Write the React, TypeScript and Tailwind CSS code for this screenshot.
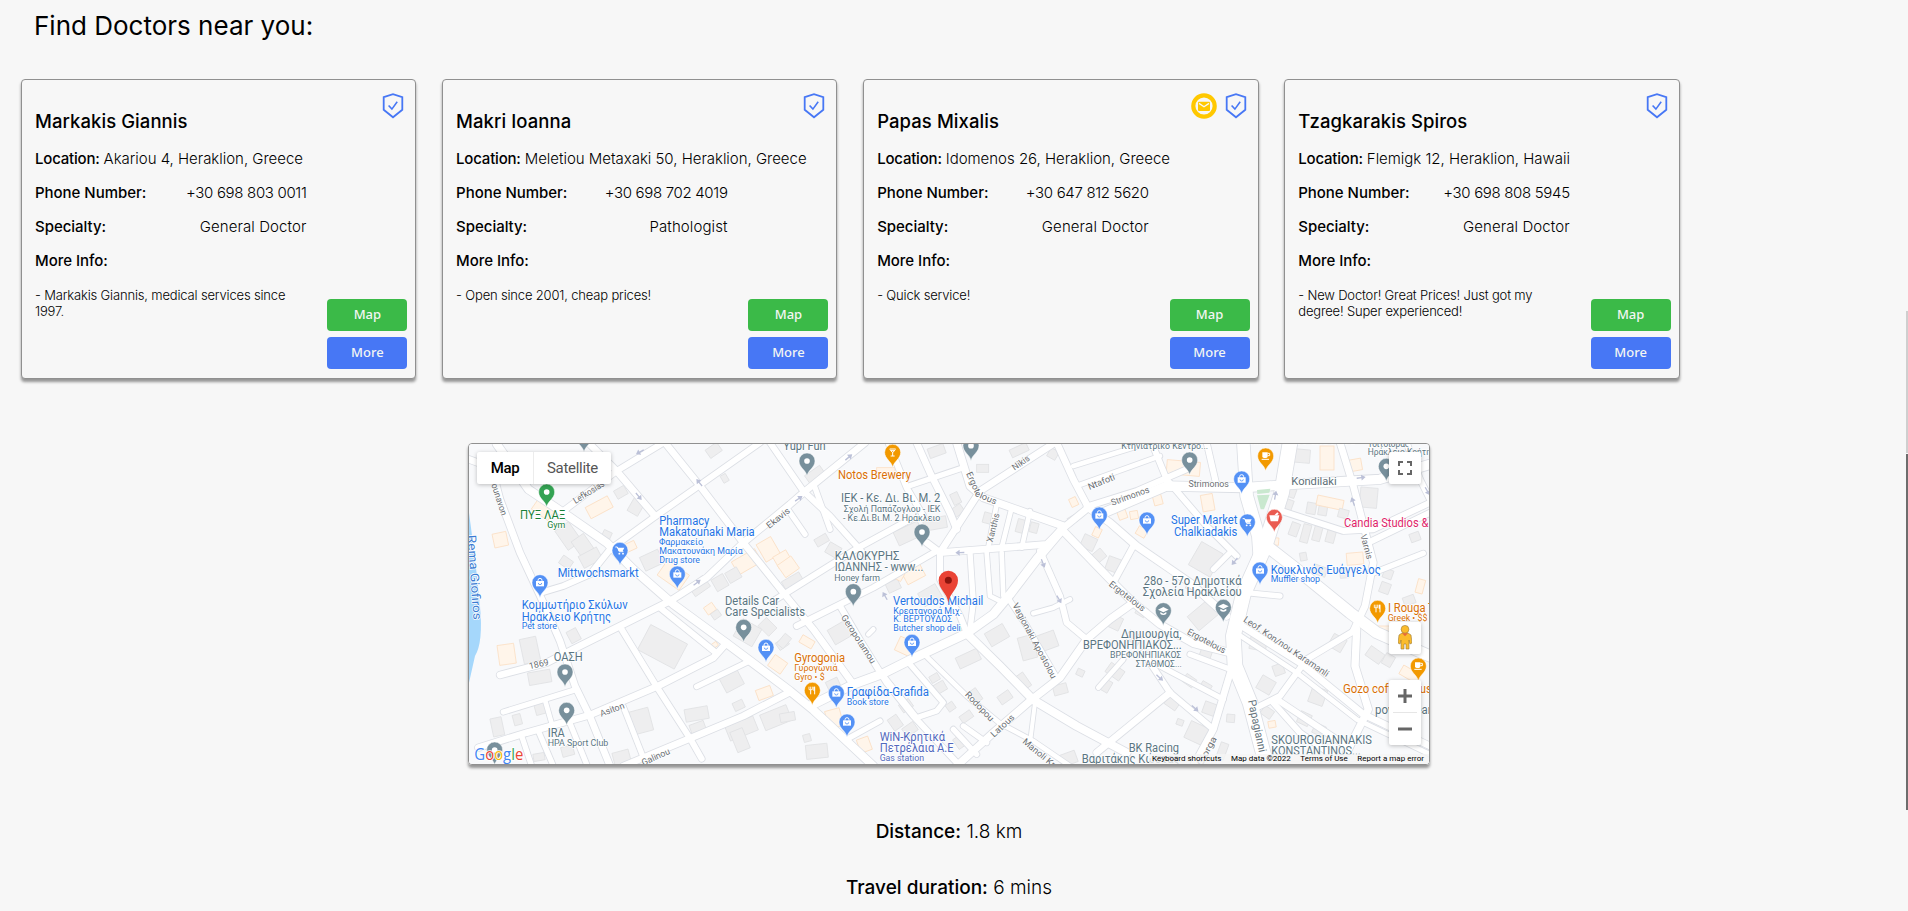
import React from "react";

type Doctor = {
  name: string;
  address: string;
  phone: string;
  specialty: string;
  info: string;
  mail?: boolean;
};

const doctors: Doctor[] = [
  { name: "Markakis Giannis", address: "Akariou 4, Heraklion, Greece", phone: "+30 698 803 0011", specialty: "General Doctor", info: "- Markakis Giannis, medical services since 1997." },
  { name: "Makri Ioanna", address: "Meletiou Metaxaki 50, Heraklion, Greece", phone: "+30 698 702 4019", specialty: "Pathologist", info: "- Open since 2001, cheap prices!" },
  { name: "Papas Mixalis", address: "Idomenos 26, Heraklion, Greece", phone: "+30 647 812 5620", specialty: "General Doctor", info: "- Quick service!", mail: true },
  { name: "Tzagkarakis Spiros", address: "Flemigk 12, Heraklion, Hawaii", phone: "+30 698 808 5945", specialty: "General Doctor", info: "- New Doctor! Great Prices! Just got my degree! Super experienced!" },
];

function ShieldIcon() {
  return (
    <svg className="h-[26px] w-[22px]" viewBox="0 0 22 26" fill="none" stroke="#4777f5">
      <path d="M1.700 4.200 11 1.200l9.300 3v12.600L11 24.300l-9.300-7.500z" strokeWidth="1.800" />
      <path d="m6.600 12.500 3.300 3.600 5.300-7.300" strokeWidth="1.600" />
    </svg>
  );
}

function MailIcon() {
  return (
    <svg className="h-[26px] w-[26px]" viewBox="0 0 26 26">
      <circle cx="13" cy="13" r="10.700" fill="#f7f7f7" stroke="#ffc800" strokeWidth="4.200" />
      <rect x="7" y="8.700" width="12" height="9.300" rx="1" fill="#ffc800" />
      <path d="m8 10.400 5 3.400 5-3.400" fill="none" stroke="#f7f7f7" strokeWidth="1.300" />
    </svg>
  );
}

function Field({ label, value, numeric }: { label: string; value?: string; numeric?: boolean }) {
  return (
    <div className="flex h-[34px] w-[271.500px] items-center justify-between text-[15px] whitespace-nowrap">
      <span className="font-medium tracking-[-0.03px]">{label}</span>
      <span className={numeric ? "font-light tracking-[-0.33px]" : "font-light tracking-[0.1px]"}>{value}</span>
    </div>
  );
}

function DoctorCard({ d }: { d: Doctor }) {
  return (
    <article className="flex h-[300px] flex-col rounded-[4px] border border-[#909090] bg-[#f7f7f7] pr-[8px] pl-[13px] shadow-[0_3px_3px_rgba(0,0,0,0.4)]">
      <div className="flex h-[27px] justify-end gap-[8px] pt-[13px] pr-[3px]">
        {d.mail && <MailIcon />}
        <ShieldIcon />
      </div>
      <h2 className="mt-[1px] h-[26px] text-[18.500px] leading-[26px] font-medium tracking-[0.07px]">{d.name}</h2>
      <div className="mt-[8px] flex h-[34px] items-center gap-[4px] text-[15px] whitespace-nowrap">
        <span className="font-medium tracking-[-0.2px]">Location:</span>
        <span className="font-light tracking-[-0.02px]">{d.address}</span>
      </div>
      <Field label="Phone Number:" value={d.phone} numeric />
      <Field label="Specialty:" value={d.specialty} />
      <Field label="More Info:" />
      <div className="flex justify-between">
        <p className="mt-[9px] w-[272px] text-[13px] leading-4 font-light tracking-[-0.17px]">{d.info}</p>
        <div className="mt-[21px] flex flex-col gap-1.5 font-[family-name:'Noto_Sans','Open_Sans',sans-serif] text-[13px] font-medium text-[#f3f6f3]">
          <button className="h-8 w-20 rounded-[4px] bg-[#3bba48]">Map</button>
          <button className="h-8 w-20 rounded-[4px] bg-[#4777f5]">More</button>
        </div>
      </div>
    </article>
  );
}

/* Map drawing units: three per CSS pixel. */
const roads: [number, string][] = [
  [20, "M27 70 95 95 120 190 180 350 250 500 300 615 345 750 390 842 450 990"],
  [24, "M110 24 205 160 310 230 440 320 520 400 640 505 800 622 920 712 990 765 1060 822 1240 990"],
  [18, "M600 515 770 652"],
  [20, "M365 0 470 105 585 240"],
  [18, "M250 468 310 450 390 415 450 340 585 242 730 140 900 20"],
  [18, "M310 225 470 105 610 20"],
  [20, "M615 20 720 150 850 320 990 495 1060 580 1180 745"],
  [20, "M120 717 260 680 340 640 480 570 630 495 740 425 850 320 990 205 1030 170 1215 20"],
  [20, "M55 935 200 890 390 837 590 752 760 665 800 620"],
  [16, "M130 828 350 760"],
  [18, "M480 572 590 752 690 907 725 968"],
  [16, "M710 752 865 677"],
  [20, "M490 990 690 907 850 840 990 768"],
  [16, "M490 812 560 990"],
  [14, "M255 792 275 862"],
  [16, "M330 862 382 990"],
  [16, "M185 900 215 990"],
  [16, "M235 885 280 990"],
  [18, "M930 20 1030 165 1110 240 1195 335 1215 360"],
  [18, "M940 495 1190 338 1350 250"],
  [18, "M1010 570 1240 455 1430 345"],
  [16, "M980 215 1035 295"],
  [16, "M1065 155 1110 280"],
  [18, "M1285 20 1340 155 1390 240"],
  [16, "M1340 152 1510 95"],
  [20, "M1370 20 1410 110 1470 230 1490 280"],
  [22, "M1490 20 1530 150 1570 185 1810 270"],
  [20, "M1800 10 1560 165 1440 350 1400 320"],
  [20, "M1790 20 1840 130 1885 215 1805 280"],
  [14, "M1840 90 2100 10"],
  [14, "M1850 150 2100 60"],
  [18, "M1880 212 2030 165 2180 100"],
  [20, "M1440 350 1760 325 1805 280"],
  [16, "M1530 350 1540 500 1530 580"],
  [14, "M1580 350 1590 480 1630 500"],
  [14, "M1625 350 1630 480"],
  [18, "M1440 350 1440 430 1500 540 1520 590"],
  [14, "M1610 205 1585 335"],
  [14, "M1655 215 1625 335"],
  [14, "M1710 225 1685 335"],
  [26, "M1050 810 1180 745 1270 712 1350 672 1520 592 1600 535 1650 475 1730 370 1805 282"],
  [18, "M1740 345 1800 480 1820 560 1880 610"],
  [14, "M1720 532 1780 515 1830 490"],
  [16, "M1640 480 1700 570 1790 725"],
  [22, "M1805 280 1950 430 2020 500 2100 565 2200 622 2310 650"],
  [22, "M1885 215 1950 260 2030 330 2190 440 2300 540"],
  [18, "M2020 330 1960 440"],
  [18, "M1140 510 1205 620 1280 740 1360 840 1500 990"],
  [14, "M1225 595 1240 580"],
  [24, "M1520 592 1620 690 1720 792 1850 870 2000 950"],
  [22, "M1490 990 1600 890 1710 795 1800 725 1880 610 1950 550 2020 500"],
  [16, "M1350 685 1450 800 1430 825 1370 845 1270 720"],
  [14, "M1400 662 1520 780 1620 862 1720 915 1830 990"],
  [12, "M1725 800 1710 920"],
  [16, "M1480 880 1550 955"],
  [16, "M1160 910 1260 855"],
  [16, "M1510 870 1580 920"],
  [44, "M2490 20 2465 170 2415 330 2350 475 2320 600 2325 690 2370 800 2420 990"],
  [38, "M2350 20 2360 180 2395 300 2400 370"],
  [18, "M2075 20 2120 130 2240 270 2330 360"],
  [18, "M2240 20 2270 150"],
  [28, "M1920 235 2120 150 2350 155 2500 145 2760 130 2910 85"],
  [16, "M2260 400 2310 350"],
  [34, "M2420 330 2510 400 2670 530 2750 590 2910 660"],
  [20, "M2330 560 2520 680 2710 835 2910 930"],
  [14, "M2335 595 2510 710 2690 850 2910 955"],
  [20, "M2640 20 2680 150 2740 380 2715 510 2680 585"],
  [18, "M2465 225 2650 285 2740 280 2910 200"],
  [18, "M2735 315 2910 230"],
  [16, "M2730 415 2890 352"],
  [18, "M2690 580 2540 670 2460 780 2390 815"],
  [22, "M2690 580 2685 690 2725 820 2660 950"],
  [18, "M2440 800 2520 890 2620 960"],
  [18, "M2450 790 2660 930"],
  [16, "M2190 655 2310 700"],
  [20, "M2320 680 2260 880 2200 990"],
  [18, "M2050 650 2130 770 2260 880"],
  [16, "M2100 690 2290 790"],
  [20, "M1910 950 2130 770"],
  [14, "M1915 755 1990 670"],
  [16, "M2360 470 2460 480"],
  [18, "M2840 20 2880 130 2910 190"],
];

/* x, y, width, height, rotation; last flag marks commercial buildings. */
const buildings: [number, number, number, number, number, 0 | 1][] = [
  [380, 195, 75, 38, -28, 1], [465, 155, 35, 28, -30, 0], [510, 190, 36, 45, 30, 0], [300, 265, 50, 70, -35, 0], [345, 300, 45, 55, -35, 0],
  [100, 290, 42, 42, -12, 1], [300, 365, 36, 28, 35, 0], [360, 345, 62, 40, -28, 0], [428, 285, 26, 20, 25, 0], [490, 320, 38, 25, -25, 1],
  [785, 115, 18, 24, -30, 0], [545, 350, 60, 45, -25, 0], [600, 390, 80, 55, 35, 1], [820, 355, 80, 45, -30, 1], [800, 400, 40, 35, -30, 0],
  [900, 310, 50, 60, -30, 1], [945, 350, 45, 40, -30, 1], [690, 430, 55, 40, -35, 0], [760, 420, 40, 40, -30, 0], [740, 28, 42, 30, -35, 0], [220, 200, 60, 40, 35, 1],
  [115, 625, 50, 60, -8, 1], [185, 605, 50, 75, -12, 0], [205, 705, 68, 38, -10, 0], [325, 580, 32, 38, -28, 0], [545, 590, 125, 85, 28, 0],
  [160, 835, 24, 32, -15, 0], [95, 845, 34, 55, -12, 0], [225, 800, 32, 35, -15, 0], [515, 820, 58, 70, -15, 0], [675, 815, 70, 38, -10, 0],
  [690, 860, 45, 26, -20, 0], [785, 710, 60, 50, -28, 0], [820, 795, 32, 26, -25, 0], [800, 855, 90, 45, -22, 0], [820, 880, 40, 65, -22, 0], [905, 820, 85, 50, -22, 0],
  [890, 755, 46, 32, -20, 1], [735, 505, 30, 26, -35, 1], [755, 525, 26, 22, -35, 0], [830, 560, 65, 60, 30, 0], [900, 555, 45, 35, 45, 0], [930, 665, 46, 40, 35, 1],
  [460, 945, 50, 40, -15, 0], [220, 952, 34, 22, -10, 0], [305, 930, 36, 30, -15, 0], [950, 610, 34, 26, -35, 0], [755, 620, 18, 14, -35, 1],
  [1040, 100, 55, 40, -35, 0], [1250, 95, 55, 30, 0, 1], [1065, 300, 40, 25, -30, 0], [1100, 325, 40, 35, 30, 0], [960, 370, 50, 45, -35, 1], [970, 420, 60, 40, -30, 0],
  [1475, 170, 24, 35, -25, 0], [1475, 210, 35, 28, -35, 0], [1305, 270, 80, 45, -25, 0], [1390, 245, 70, 35, -10, 0], [1550, 85, 36, 24, 0, 0], [1330, 390, 60, 45, -28, 1], [1380, 455, 60, 45, -30, 0],
  [1670, 250, 24, 40, 15, 0], [1710, 260, 24, 30, 15, 0], [1570, 230, 24, 32, 15, 0], [1405, 30, 50, 30, -20, 0], [1650, 30, 55, 25, -25, 0], [1830, 185, 22, 26, -25, 1], [1765, 40, 28, 28, 30, 0],
  [1825, 240, 26, 22, -30, 0], [1865, 300, 42, 40, 25, 0], [1895, 345, 40, 32, -40, 0], [1900, 275, 22, 28, 25, 1], [1280, 435, 40, 30, -25, 0], [1300, 405, 30, 26, 30, 1],
  [1110, 565, 60, 50, -30, 0], [1020, 605, 42, 25, 30, 1], [960, 595, 25, 40, 40, 0], [1310, 610, 55, 45, 25, 1], [1100, 730, 38, 28, -25, 0], [1490, 650, 70, 36, -25, 0],
  [1580, 575, 62, 45, -30, 0], [1680, 600, 45, 70, -15, 0], [1735, 590, 55, 50, -20, 0], [1665, 715, 40, 48, -35, 0], [1615, 770, 40, 28, -35, 0], [1530, 760, 30, 40, -35, 0],
  [1410, 715, 28, 22, -30, 0], [1420, 740, 38, 30, -30, 0], [1460, 800, 24, 24, -35, 0], [1500, 830, 38, 24, -35, 0], [1100, 820, 45, 55, -15, 1], [1195, 905, 36, 42, -20, 1],
  [1030, 895, 22, 22, -15, 0], [1038, 925, 65, 42, -6, 0], [960, 830, 45, 26, -10, 0], [1290, 840, 32, 40, -35, 0], [1330, 865, 40, 30, -35, 0], [1780, 745, 42, 30, -15, 0], [1850, 700, 22, 20, 25, 0],
  [1485, 900, 30, 35, -35, 0], [1800, 950, 50, 36, -20, 0], [1320, 795, 36, 28, -35, 0],
  [2120, 75, 100, 42, 5, 1], [1970, 200, 26, 50, -20, 1], [2010, 225, 24, 24, -10, 1], [2080, 175, 26, 32, -15, 1], [2225, 175, 36, 50, -10, 1], [2030, 275, 30, 26, 30, 1],
  [2200, 330, 75, 80, 30, 0], [1940, 365, 42, 42, 20, 0], [2580, 30, 42, 72, 0, 1], [2500, 40, 50, 40, 5, 0], [2660, 70, 45, 35, -10, 1], [2475, 155, 32, 28, 20, 0], [2470, 190, 28, 32, 20, 0],
  [2540, 200, 28, 34, 10, 0], [2575, 210, 26, 28, 10, 0], [2570, 185, 80, 30, 12, 1], [2635, 220, 30, 26, 15, 0], [2490, 260, 26, 40, 20, 0], [2525, 265, 24, 55, 15, 0], [2560, 270, 24, 45, 15, 0], [2600, 275, 26, 45, 15, 0],
  [2700, 155, 52, 60, 5, 0], [2660, 350, 50, 36, -5, 1], [2430, 305, 26, 22, 5, 1], [2520, 350, 20, 24, -10, 0], [2640, 400, 26, 26, -5, 0], [2560, 390, 40, 28, 20, 0], [2770, 400, 28, 28, 20, 0], [2760, 440, 30, 32, 20, 0],
  [2870, 430, 22, 42, 15, 1], [2850, 290, 30, 26, -20, 0], [2830, 480, 35, 26, -20, 0], [2370, 600, 50, 42, 10, 0], [2395, 725, 46, 44, 30, 0], [2440, 685, 32, 32, -20, 0], [2550, 755, 46, 50, 20, 0],
  [2720, 640, 50, 34, 35, 0], [2770, 655, 30, 35, 30, 0], [2610, 600, 44, 42, 30, 0], [2425, 855, 22, 20, -10, 1], [2405, 815, 34, 28, 35, 0], [2515, 830, 36, 36, 25, 0], [2560, 865, 34, 32, 25, 0],
  [2180, 865, 65, 55, 25, 0], [2230, 800, 38, 36, 20, 0], [2150, 850, 20, 18, 20, 0], [2300, 835, 24, 24, 5, 0], [2275, 920, 24, 50, 20, 0], [2120, 775, 40, 42, 35, 0], [2170, 720, 36, 28, 35, 0], [2220, 740, 32, 28, 30, 0],
  [1940, 690, 50, 34, 35, 0], [1920, 730, 32, 36, 30, 0], [1950, 540, 34, 40, 25, 0], [2190, 510, 80, 55, -40, 0], [2000, 590, 42, 30, 30, 0], [2220, 640, 34, 28, 20, 0], [2820, 700, 60, 30, 30, 1], [2750, 570, 45, 30, 0, 1],
  [2380, 385, 30, 32, 20, 1], [2030, 510, 30, 30, 30, 0], [2180, 440, 34, 26, 30, 0],
];

type PinKind = "dot" | "bag" | "cart" | "fork" | "cup" | "school" | "drink" | "basket";
const pins: [number, number, string, PinKind][] = [
  [260, 168, "#34a353", "dot"], [372, 3, "#78909c", "dot"], [480, 343, "#5491f5", "cart"], [240, 440, "#5491f5", "bag"], [652, 414, "#5491f5", "bag"],
  [315, 708, "#78909c", "dot"], [320, 823, "#78909c", "dot"], [104, 942, "#78909c", "dot"], [851, 574, "#78909c", "dot"], [918, 634, "#5491f5", "bag"],
  [1041, 75, "#78909c", "dot"], [1298, 49, "#f29900", "drink"], [1533, 29, "#78909c", "dot"], [1386, 288, "#78909c", "dot"], [1180, 467, "#78909c", "dot"],
  [1918, 237, "#5491f5", "bag"], [1356, 619, "#5491f5", "bag"], [1057, 763, "#f29900", "fork"], [1129, 771, "#5491f5", "bag"], [1161, 858, "#5491f5", "bag"],
  [2189, 72, "#78909c", "dot"], [2417, 60, "#f29900", "cup"], [2345, 129, "#5491f5", "bag"], [2061, 252, "#5491f5", "bag"], [2362, 258, "#5491f5", "cart"],
  [2443, 244, "#ea5b51", "basket"], [2400, 402, "#5491f5", "bag"], [2779, 91, "#78909c", "dot"], [2110, 524, "#78909c", "school"], [2290, 514, "#78909c", "school"],
  [2753, 517, "#f29900", "fork"], [2875, 690, "#f29900", "cup"],
];

function Glyph({ kind, color }: { kind: PinKind; color: string }) {
  switch (kind) {
    case "dot":
      return <circle r="8.500" fill="#fff" />;
    case "bag":
      return (
        <g>
          <path d="M-6-4v-3a6 6 0 0 1 12 0v3" fill="none" stroke="#fff" strokeWidth="3" />
          <path d="M-12-5h24v16h-24z" fill="#fff" />
          <path d="M-5 1a5 5 0 0 0 10 0" fill="none" stroke={color} strokeWidth="2.500" />
        </g>
      );
    case "cart":
      return (
        <g>
          <path d="M-14-10h6l6 14h12" fill="none" stroke="#fff" strokeWidth="3" />
          <path d="M-8-8h21l-5 10H-4z" fill="#fff" />
          <circle cx="-2" cy="10" r="2.800" fill="#fff" />
          <circle cx="9" cy="10" r="2.800" fill="#fff" />
        </g>
      );
    case "fork":
      return (
        <g fill="none" stroke="#fff" strokeWidth="3">
          <path d="M-5-1v13M7-11v23" />
          <path d="M-10-11v9h10v-9M-5-11v9" strokeWidth="2.500" />
          <path d="M5-11v12" strokeWidth="4" />
        </g>
      );
    case "cup":
      return (
        <g>
          <path d="M-10-11h16v12q0 5-5 5h-6q-5 0-5-5z" fill="#fff" />
          <path d="M6-8h6v7H6M-12 10h22" fill="none" stroke="#fff" strokeWidth="3" />
        </g>
      );
    case "school":
      return (
        <g fill="#fff">
          <path d="m-16-3 16-8 16 8-16 8z" />
          <path d="M-9 4v6q9 6 18 0V4L0 9z" />
        </g>
      );
    case "drink":
      return <path d="M-9-10H9M-8-8 0 1l8-9M0 0v11M-6 11H6M-5-5H5" fill="none" stroke="#fff" strokeWidth="3" />;
    case "basket":
      return (
        <g fill="#fff">
          <path d="M-15-6h30l-4 18h-22z" />
          <path d="m0-6 9-9 4 4-5 5z" />
        </g>
      );
  }
}

function Pin({ x, y, color, kind }: { x: number; y: number; color: string; kind: PinKind }) {
  return (
    <g transform={`translate(${x} ${y})`}>
      <path d="M0 45C-3 27-24 20-24 0a24 24 0 0 1 48 0C24 20 3 27 0 45Z" fill={color} stroke="#fff" strokeWidth="1.500" />
      <Glyph kind={kind} color={color} />
    </g>
  );
}

const GREY = "#5a7582";
const BLUE = "#2474e5";
const ORANGE = "#d96f05";

/* x, baseline, width, size, colour, text */
const labels: [number, number, number, number, string, string][] = [
  [180, 248, 136, 36, "#188038", "ΠΥΞ ΛΑΞ"], [262, 276, 54, 27, "#188038", "Gym"],
  [598, 267, 150, 36, BLUE, "Pharmacy"], [598, 301, 286, 36, BLUE, "Makatounaki Maria"],
  [597, 327, 132, 27, BLUE, "Φαρμακείο"], [598, 354, 250, 27, BLUE, "Μακατουνάκη Μαρία"], [598, 380, 122, 27, BLUE, "Drug store"],
  [293, 423, 243, 36, BLUE, "Mittwochsmarkt"],
  [185, 519, 318, 36, BLUE, "Κομμωτήριο Σκύλων"], [185, 554, 268, 36, BLUE, "Ηράκλειο Κρήτης"], [185, 580, 106, 27, BLUE, "Pet store"],
  [795, 507, 162, 36, GREY, "Details Car"], [795, 541, 240, 36, GREY, "Care Specialists"],
  [281, 674, 87, 36, GREY, "ΟΑΣΗ"], [263, 903, 51, 36, GREY, "IRA"], [263, 930, 182, 27, GREY, "HPA Sport Club"],
  [970, 41, 127, 36, GREY, "Yupi Fun"], [1134, 130, 219, 36, ORANGE, "Notos Brewery"],
  [1143, 199, 298, 36, GREY, "ΙΕΚ - Κε. Δι. Βι. Μ. 2"], [1151, 228, 290, 27, GREY, "Σχολή Παπάζογλου - ΙΕΚ"], [1149, 255, 292, 27, GREY, "- Κε.Δι.Βι.Μ. 2 Ηράκλειο"],
  [1124, 372, 194, 36, GREY, "ΚΑΛΟΚΥΡΗΣ"], [1124, 406, 266, 36, GREY, "ΙΩΑΝΝΗΣ - www..."], [1123, 434, 137, 27, GREY, "Honey farm"],
  [1299, 507, 271, 36, BLUE, "Vertoudos Michail"], [1300, 533, 206, 27, BLUE, "Κρεαταγορά Μιχ."], [1300, 559, 177, 27, BLUE, "Κ. ΒΕΡΤΟΥΔΟΣ"], [1300, 586, 202, 27, BLUE, "Butcher shop deli"],
  [1003, 678, 152, 36, ORANGE, "Gyrogonia"], [1003, 705, 130, 27, ORANGE, "Γυρογωνιά"], [1003, 731, 91, 27, ORANGE, "Gyro • $"],
  [1160, 781, 247, 36, BLUE, "Γραφίδα-Grafida"], [1160, 808, 126, 27, BLUE, "Book store"],
  [1259, 914, 196, 36, "#5268bd", "WiN-Κρητικά"], [1259, 948, 222, 36, "#5268bd", "Πετρέλαια Α.Ε"], [1259, 975, 133, 27, "#5268bd", "Gas station"],
  [1984, 38, 260, 28, GREY, "Κτηνιατρικό Κέντρο..."], [2360, 25, 325, 36, ORANGE, "Mikel Coffee and Food"],
  [2723, 32, 125, 28, GREY, "Τσιτσιδράς"], [2723, 58, 190, 28, GREY, "Ηράκλειο Κρήτη"],
  [2133, 265, 199, 36, BLUE, "Super Market"], [2142, 300, 190, 36, BLUE, "Chalkiadakis"], [2652, 272, 253, 36, "#e01e6a", "Candia Studios &"],
  [2432, 413, 330, 36, BLUE, "Κουκλινός Ευάγγελος"], [2432, 438, 148, 27, BLUE, "Muffler shop"],
  [2051, 447, 294, 36, GREY, "28ο - 57ο Δημοτικά"], [2048, 480, 297, 36, GREY, "Σχολεία Ηρακλείου"],
  [1983, 605, 181, 36, GREY, "Δημιουργία,"], [1869, 639, 296, 36, GREY, "ΒΡΕΦΟΝΗΠΙΑΚΟΣ..."], [1950, 665, 214, 27, GREY, "ΒΡΕΦΟΝΗΠΙΑΚΟΣ"], [2027, 692, 138, 27, GREY, "ΣΤΑΘΜΟΣ..."],
  [2784, 529, 176, 36, ORANGE, "I Rouga Tou"], [2783, 554, 119, 27, ORANGE, "Greek • $$"], [2649, 771, 285, 36, ORANGE, "Gozo coffee house"],
  [2745, 833, 170, 36, GREY, "power gear"], [2006, 947, 151, 36, GREY, "BK Racing"], [1865, 981, 293, 36, GREY, "Βαριτάκης Κώστας"],
  [2434, 925, 302, 36, GREY, "SKOUROGIANNAKIS"], [2434, 957, 268, 36, GREY, "KONSTANTINOS..."], [2494, 147, 136, 35, "#5d6f78", "Kondilaki"],
];

/* centre x, centre y, width, size, rotation, colour, text */
const streets: [number, number, number, number, number, string, string][] = [
  [118, 190, 100, 27, 72, "#6b6f74", "ounavon"], [386, 168, 105, 27, -32, "#6b6f74", "Lefkosias"], [954, 246, 82, 27, -38, "#6b6f74", "Ekavis"],
  [44, 424, 255, 36, 86, "#3b7cd3", "Rema Giofiros"], [236, 684, 60, 27, -13, "#6b6f74", "1869"], [456, 820, 76, 27, -20, "#6b6f74", "Asiton"],
  [587, 962, 90, 27, -24, "#6b6f74", "Galinou"], [1682, 80, 58, 27, -35, "#6b6f74", "Nikis"], [1540, 138, 65, 27, 66, "#6b6f74", "Ergot"], [1578, 184, 68, 27, 24, "#6b6f74", "elous"],
  [1599, 275, 88, 27, -76, "#6b6f74", "Xanthis"], [1924, 137, 85, 27, -22, "#6b6f74", "Ntafoti"], [2010, 180, 120, 27, -20, "#6b6f74", "Strimonos"], [2246, 144, 121, 27, 0, "#6b6f74", "Strimonos"],
  [2720, 332, 76, 27, 75, "#6b6f74", "Varnis"], [2002, 480, 130, 27, 38, "#6b6f74", "Ergotelous"], [2240, 615, 127, 27, 28, "#6b6f74", "Ergotelous"], [2479, 631, 302, 28, 34, "#6b6f74", "Leof. Kon/nou Karamanli"],
  [1196, 609, 168, 27, 57, "#6b6f74", "Geropotamou"], [1724, 614, 252, 27, 62, "#6b6f74", "Vagionaki Apostolou"], [1559, 811, 112, 27, 46, "#6b6f74", "Rodopou"],
  [1627, 869, 87, 27, -43, "#6b6f74", "Latous"], [1737, 950, 118, 27, 40, "#6b6f74", "Manoli Kr"], [2392, 870, 160, 34, 78, "#68767e", "Papagianni"], [2240, 945, 95, 27, -62, "#6b6f74", "Giorga"],
];

const arrows: [number, number, number][] = [
  [540, 48, 150], [536, 181, 50], [718, 140, 230], [711, 440, -38], [1166, 64, -40], [1016, 188, -35], [1500, 350, 178], [1749, 382, 68],
  [1797, 490, 60], [1275, 480, 240], [2446, 178, -80], [2703, 125, -8], [2679, 197, 250], [2324, 376, 130], [2099, 725, 42], [2205, 817, 42], [2902, 165, 60],
];

function MapDrawing() {
  return (
    <svg className="block h-full w-full" viewBox="27 24 2880 960" preserveAspectRatio="none">
      <rect x="27" y="24" width="2880" height="960" fill="#f8f9fb" />
      <path d="M27 230Q50 400 60 510T45 660L27 740Z" fill="#a5d7fb" />
      {buildings.map(([x, y, w, h, r, shop], i) => (
        <rect key={i} x={x} y={y} width={w} height={h} transform={`rotate(${r} ${x + w / 2} ${y + h / 2})`} fill={shop ? "#fff5ea" : "#eeeeef"} stroke={shop ? "#fbe0c6" : "#e1e2e4"} strokeWidth="2.500" />
      ))}
      <g fill="none" strokeLinecap="round" strokeLinejoin="round">
        {roads.map(([w, d], i) => (
          <path key={i} d={d} stroke="#dcdfe5" strokeWidth={w + 5} />
        ))}
        {roads.map(([w, d], i) => (
          <path key={i} d={d} stroke="#ffffff" strokeWidth={w} />
        ))}
      </g>
      <path d="M2391 162l40-4-3 12-36 4zM2391 178l38-2-17 44h-10z" fill="#c9e8cf" />
      {arrows.map(([x, y, r], i) => (
        <path key={i} transform={`translate(${x} ${y}) rotate(${r})`} d="M-13-2H1v-7L14 0 1 9V2h-14z" fill="#bcc1d8" />
      ))}
      <g fontFamily="Roboto, 'Noto Sans', sans-serif" stroke="#fff" strokeWidth="4" strokeLinejoin="round" style={{ paintOrder: "stroke" }}>
        {streets.map(([x, y, w, s, r, c, t], i) => (
          <text key={i} transform={`translate(${x} ${y}) rotate(${r})`} x={-w / 2} y={s * 0.35} fontSize={s} textLength={w} lengthAdjust="spacingAndGlyphs" fill={c}>{t}</text>
        ))}
      </g>
      {pins.map(([x, y, c, k], i) => (
        <Pin key={i} x={x} y={y} color={c} kind={k} />
      ))}
      <g fontFamily="Roboto, 'Noto Sans', sans-serif" stroke="#fff" strokeWidth="4" strokeLinejoin="round" style={{ paintOrder: "stroke" }}>
        {labels.map(([x, y, w, s, c, t], i) => (
          <text key={i} x={x} y={y} fontSize={s} textLength={w} lengthAdjust="spacingAndGlyphs" fill={c}>{t}</text>
        ))}
      </g>
      <g transform="translate(1465 433)">
        <path d="M0 67C-4 38-29 28-29 0a29 29 0 0 1 58 0C29 28 4 38 0 67Z" fill="#ea4335" />
        <circle r="10.500" fill="#8c150e" />
      </g>
      <g fontFamily="'Open Sans', 'Noto Sans', sans-serif" fontSize="47" fontWeight="500" stroke="#fff" strokeWidth="5" style={{ paintOrder: "stroke" }}>
        <text x="43" y="971" textLength="147" lengthAdjust="spacingAndGlyphs">
          <tspan fill="#4285f4">G</tspan>
          <tspan fill="#ea4335">o</tspan>
          <tspan fill="#fbbc04">o</tspan>
          <tspan fill="#4285f4">g</tspan>
          <tspan fill="#34a853">l</tspan>
          <tspan fill="#ea4335">e</tspan>
        </text>
      </g>
    </svg>
  );
}

function Pegman() {
  return (
    <svg className="h-[26px] w-[14px]" viewBox="0 0 14 26">
      <path d="M4 8h6l3 2 1 8-2 1-1-4v9H8v-5H6v5H3v-9l-1 4-2-1 1-8z" fill="#fbbc2c" stroke="#9b7a3c" strokeWidth=".6" />
      <circle cx="7" cy="4.300" r="3.900" fill="#fbbc2c" stroke="#9b7a3c" strokeWidth=".6" />
      <path d="M4 8.200h6l-3 3z" fill="#e66b3b" />
    </svg>
  );
}

function MapPanel() {
  return (
    <section className="relative h-[322px] w-[962px] overflow-hidden rounded-[4px] border border-[#909090] font-[family-name:'Roboto',sans-serif]">
      <MapDrawing />
      <div className="absolute top-2 left-2 flex h-8 items-center rounded-[2px] bg-white text-[15px] tracking-[-0.3px] shadow-[0_1px_4px_rgba(0,0,0,0.25)]">
        <span className="w-14 text-center font-medium text-black">Map</span>
        <span className="flex h-full w-[78px] items-center justify-center border-l border-[#ececec] text-[#565656]">Satellite</span>
      </div>
      <div className="absolute top-2 right-2 flex h-8 w-8 items-center justify-center rounded-[2px] bg-white shadow-[0_1px_4px_rgba(0,0,0,0.25)]">
        <svg className="h-[14px] w-[14px]" viewBox="0 0 14 14" fill="none" stroke="#666" strokeWidth="2">
          <path d="M1 5V1h4M9 1h4v4M13 9v4H9M5 13H1V9" />
        </svg>
      </div>
      <div className="absolute right-2 bottom-[19px] flex flex-col gap-[26px]">
        <div className="flex h-8 w-8 items-center justify-center rounded-[2px] bg-white shadow-[0_1px_4px_rgba(0,0,0,0.25)]">
          <Pegman />
        </div>
        <div className="flex h-[65px] w-8 flex-col items-center rounded-[2px] bg-white shadow-[0_1px_4px_rgba(0,0,0,0.25)]">
          <svg className="h-8 w-8" viewBox="0 0 32 32" stroke="#666" strokeWidth="3">
            <path d="M9 16h14M16 9v14" />
          </svg>
          <div className="h-px w-6 bg-[#e6e6e6]" />
          <svg className="h-8 w-8" viewBox="0 0 32 32" stroke="#666" strokeWidth="3">
            <path d="M9 16h14" />
          </svg>
        </div>
      </div>
      <div className="absolute right-0 bottom-0 flex h-[10px] items-center gap-[9.500px] bg-[#f5f5f5]/80 pr-[5px] pl-[3px] text-[8px] leading-none whitespace-nowrap text-black">
        <span>Keyboard shortcuts</span>
        <span>Map data ©2022</span>
        <span>Terms of Use</span>
        <span>Report a map error</span>
      </div>
    </section>
  );
}

export default function App() {
  return (
    <div className="flex h-[911px] w-full overflow-hidden bg-[#f7f7f7] font-[family-name:Inter,'Liberation_Sans',sans-serif] text-black">
      <main className="flex flex-1 flex-col">
        <h1 className="mt-[8px] ml-[34px] h-9 text-[26px] leading-9 font-normal">Find Doctors near you:</h1>
        <div className="mt-[35px] ml-[21px] grid grid-cols-[repeat(4,395.4px)] gap-[25.7px]">
          {doctors.map((d) => (
            <DoctorCard key={d.name} d={d} />
          ))}
        </div>
        <div className="mt-[64px] flex w-[1898px] flex-col items-center">
          <div className="rounded-[4px] shadow-[0_3px_3px_rgba(0,0,0,0.4)]">
            <MapPanel />
          </div>
          <p className="mt-[51px] h-8 text-[19px] leading-8 font-light"><span className="font-medium">Distance:</span> 1.8 km</p>
          <p className="mt-6 h-8 text-[19px] leading-8 font-light"><span className="font-medium">Travel duration:</span> 6 mins</p>
        </div>
      </main>
      <aside className="flex w-[2px] flex-col gap-px pt-[311px]">
        <div className="h-[142px] bg-[#cfcfcf]" />
        <div className="h-[356px] bg-[#6d6d6d]" />
      </aside>
    </div>
  );
}
